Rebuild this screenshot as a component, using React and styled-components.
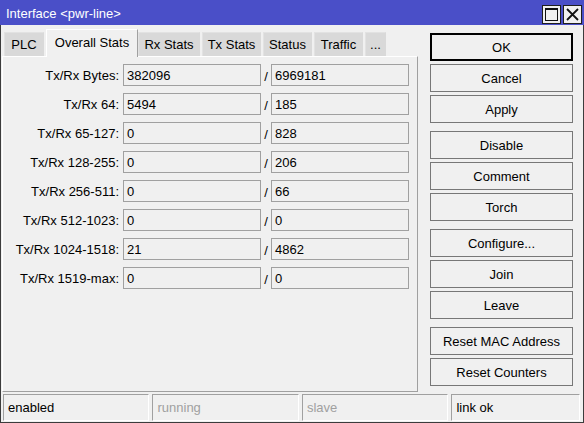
import React from "react";
import styled, { createGlobalStyle } from "styled-components";

const Global = createGlobalStyle`
  html, body { margin: 0; padding: 0; background: #ffffff; }
  * { box-sizing: border-box; }
`;

const Window = styled.div`
  width: 584px;
  height: 423px;
  display: flex;
  flex-direction: column;
  background: #f0f0f0;
  border: 1px solid #3c3c3c;
  border-top: 0;
  font-family: "Liberation Sans", Arial, sans-serif;
  font-size: 13px;
  color: #000;
`;

const TitleBar = styled.div`
  height: 25px;
  margin: 0 -1px;
  padding: 0 2px 0 6px;
  display: flex;
  align-items: center;
  background: #4a4fc8;
  color: #ffffff;
`;

const Title = styled.div`
  flex: 1;
  padding-top: 1px;
`;

const TitleButtons = styled.div`
  display: flex;
  gap: 2px;
  margin-top: 4px;
`;

const TitleButton = styled.div`
  width: 19px;
  height: 19px;
  border: 1px solid #1e1e1e;
  background: #f0f0f0;
  display: flex;
  align-items: center;
  justify-content: center;
`;

const Body = styled.div`
  flex: 1;
  display: flex;
  gap: 12px;
  padding: 3px 9px 0 1px;
`;

const LeftPane = styled.div`
  width: 416px;
  display: flex;
  flex-direction: column;
`;

const TabRow = styled.div`
  height: 28px;
  display: flex;
  align-items: flex-end;
  padding-left: 2px;
`;

const Tab = styled.div`
  width: ${(p) => p.$w}px;
  height: ${(p) => (p.$active ? 28 : 24)}px;
  margin: ${(p) => (p.$active ? "0 0 -1px 0" : "0 2px 0 0")};
  display: flex;
  align-items: center;
  justify-content: center;
  padding-bottom: ${(p) => (p.$active ? 2 : 0)}px;
  background: ${(p) => (p.$active ? "#f0f0f0" : "#d9d9d9")};
  border-top: 1px solid ${(p) => (p.$active ? "#ffffff" : "#e2e2e2")};
  border-left: 1px solid ${(p) => (p.$active ? "#ffffff" : "#e2e2e2")};
  border-right: 1px solid ${(p) => (p.$active ? "#a0a0a0" : "#d9d9d9")};
  position: relative;
  z-index: ${(p) => (p.$active ? 1 : 0)};
  white-space: nowrap;
`;

const Panel = styled.div`
  height: 336px;
  border-top: 1px solid #ffffff;
  border-left: 1px solid #ffffff;
  border-right: 1px solid #a0a0a0;
  border-bottom: 1px solid #a0a0a0;
  padding-top: 7px;
  display: grid;
  grid-template-columns: 120px 138px 10px 138px;
  grid-auto-rows: 22px;
  row-gap: 7px;
  align-content: start;
`;

const Label = styled.div`
  padding-right: 4px;
  text-align: right;
  align-self: center;
  white-space: nowrap;
`;

const Field = styled.div`
  height: 22px;
  border: 1px solid #a0a0a0;
  padding: 0 3px;
  display: flex;
  align-items: center;
  background: #f0f0f0;
`;

const Slash = styled.div`
  text-align: center;
  align-self: center;
  padding-top: 2px;
`;

const ButtonColumn = styled.div`
  width: 143px;
  display: flex;
  flex-direction: column;
  gap: 8px;
  padding-top: 5px;
`;

const ButtonGroup = styled.div`
  display: flex;
  flex-direction: column;
  gap: 3px;
`;

const Button = styled.div`
  height: 28px;
  display: flex;
  align-items: center;
  justify-content: center;
  background: #f0f0f0;
  border: ${(p) => (p.$default ? "2px solid #000000" : "1px solid #777777")};
  white-space: nowrap;
`;

const StatusBar = styled.div`
  height: 29px;
  display: flex;
  gap: 3px;
  padding: 1px 3px 1px 2px;
`;

const StatusCell = styled.div`
  width: ${(p) => p.$w}px;
  display: flex;
  align-items: center;
  padding-left: 4px;
  border-top: 1px solid #a0a0a0;
  border-left: 1px solid #a0a0a0;
  border-right: 1px solid #ffffff;
  border-bottom: 1px solid #ffffff;
  color: ${(p) => (p.$dim ? "#a0a0a0" : "#000000")};
`;

const tabs = [
  { name: "PLC", w: 40 },
  { name: "Overall Stats", w: 92, active: true },
  { name: "Rx Stats", w: 62 },
  { name: "Tx Stats", w: 59 },
  { name: "Status", w: 49 },
  { name: "Traffic", w: 49 },
  { name: "...", w: 21 },
];

const rows = [
  ["Tx/Rx Bytes:", "382096", "6969181"],
  ["Tx/Rx 64:", "5494", "185"],
  ["Tx/Rx 65-127:", "0", "828"],
  ["Tx/Rx 128-255:", "0", "206"],
  ["Tx/Rx 256-511:", "0", "66"],
  ["Tx/Rx 512-1023:", "0", "0"],
  ["Tx/Rx 1024-1518:", "21", "4862"],
  ["Tx/Rx 1519-max:", "0", "0"],
];

const buttonGroups = [
  ["OK", "Cancel", "Apply"],
  ["Disable", "Comment", "Torch"],
  ["Configure...", "Join", "Leave"],
  ["Reset MAC Address", "Reset Counters"],
];

const status = [
  { text: "enabled", w: 147 },
  { text: "running", w: 147, dim: true },
  { text: "slave", w: 147, dim: true },
  { text: "link ok", w: 129 },
];

export default function App() {
  return (
    <>
      <Global />
      <Window>
        <TitleBar>
          <Title>Interface &lt;pwr-line&gt;</Title>
          <TitleButtons>
            <TitleButton>
              <svg width="13" height="13" viewBox="0 0 13 13">
                <rect x="0.5" y="0.5" width="12" height="12" fill="none" stroke="#111" />
                <rect x="0" y="0" width="13" height="2" fill="#111" />
              </svg>
            </TitleButton>
            <TitleButton>
              <svg width="13" height="13" viewBox="0 0 13 13">
                <path d="M1 1 L12 12 M12 1 L1 12" stroke="#111" strokeWidth="1.8" />
              </svg>
            </TitleButton>
          </TitleButtons>
        </TitleBar>
        <Body>
          <LeftPane>
            <TabRow>
              {tabs.map((t) => (
                <Tab key={t.name} $w={t.w} $active={t.active}>
                  {t.name}
                </Tab>
              ))}
            </TabRow>
            <Panel>
              {rows.map(([label, tx, rx]) => (
                <React.Fragment key={label}>
                  <Label>{label}</Label>
                  <Field>{tx}</Field>
                  <Slash>/</Slash>
                  <Field>{rx}</Field>
                </React.Fragment>
              ))}
            </Panel>
          </LeftPane>
          <ButtonColumn>
            {buttonGroups.map((group, i) => (
              <ButtonGroup key={i}>
                {group.map((b) => (
                  <Button key={b} $default={b === "OK"}>
                    {b}
                  </Button>
                ))}
              </ButtonGroup>
            ))}
          </ButtonColumn>
        </Body>
        <StatusBar>
          {status.map((s) => (
            <StatusCell key={s.text} $w={s.w} $dim={s.dim}>
              {s.text}
            </StatusCell>
          ))}
        </StatusBar>
      </Window>
    </>
  );
}
